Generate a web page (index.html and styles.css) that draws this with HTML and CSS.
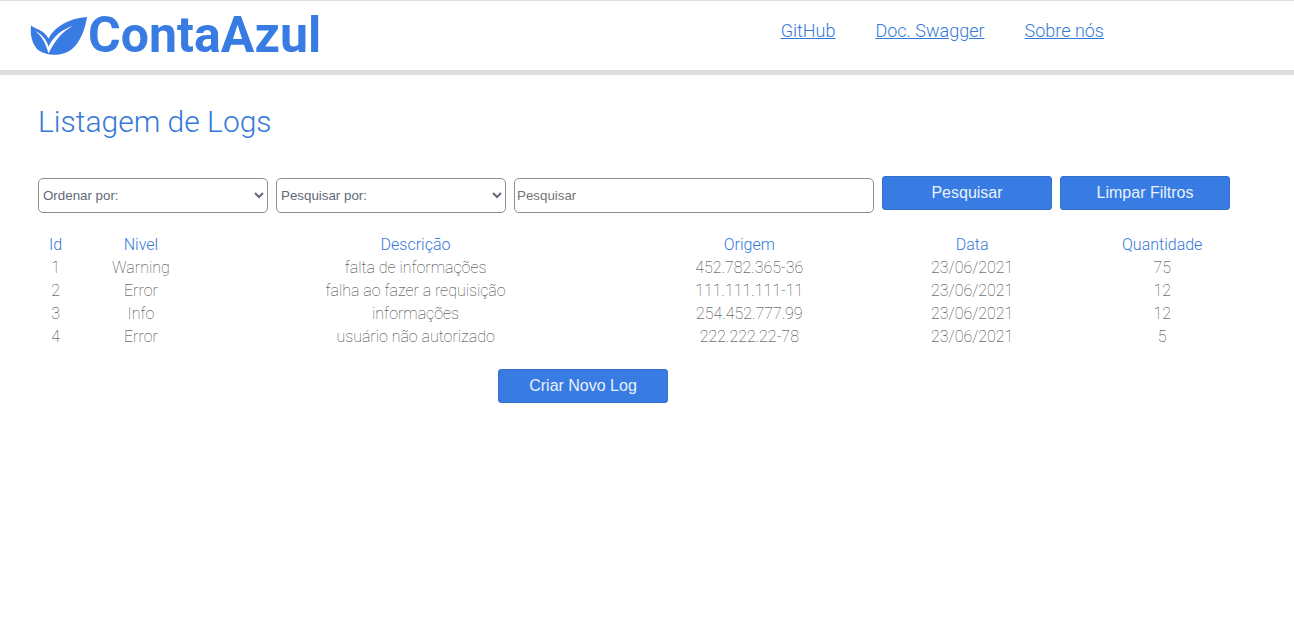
FILE: index.html
```html
<!DOCTYPE html>
<html lang="pt-BR">
<head>
<meta charset="utf-8">
<meta name="viewport" content="width=device-width, initial-scale=1">
<title>ContaAzul - Listagem de Logs</title>
<link rel="stylesheet" href="styles.css">
</head>
<body>
<header class="header">
  <a class="brand" href="#">
    <svg class="brand-mark" viewBox="0 0 58 40" aria-hidden="true">
      <path fill="#387be2" d="M1 9.500C7 14 14 14 18.500 22.500C25 10 40 2 57 1C55 14 50 26 42 33C34 40 17 41 8 34C2 28 0 19 1 9.500Z"/>
      <path fill="#fff" d="M5 15C12 18 16.500 24 18.500 30.500C23 21 32 13 43 10C33 15 25 24 18.500 37.500C16 28 12 20 5 15Z"/>
    </svg>
    <span class="brand-name">ContaAzul</span>
  </a>
  <nav class="nav">
    <a href="#">GitHub</a>
    <a href="#">Doc. Swagger</a>
    <a href="#">Sobre nós</a>
  </nav>
</header>
<main class="content">
  <h1 class="title">Listagem de Logs</h1>
  <form class="filters">
    <select class="field" aria-label="Ordenar por"><option>Ordenar por:</option></select>
    <select class="field" aria-label="Pesquisar por"><option>Pesquisar por:</option></select>
    <input class="field field-search" type="text" placeholder="Pesquisar" aria-label="Pesquisar">
    <button class="button" type="button">Pesquisar</button>
    <button class="button" type="button">Limpar Filtros</button>
  </form>
  <table class="logs">
    <colgroup><col class="col-id"><col class="col-level"><col class="col-description"><col class="col-origin"><col class="col-date"><col class="col-count"></colgroup>
    <thead>
      <tr><th>Id</th><th>Nivel</th><th>Descrição</th><th>Origem</th><th>Data</th><th>Quantidade</th></tr>
    </thead>
    <tbody>
      <tr><td>1</td><td>Warning</td><td>falta de informações</td><td>452.782.365-36</td><td>23/06/2021</td><td>75</td></tr>
      <tr><td>2</td><td>Error</td><td>falha ao fazer a requisição</td><td>111.111.111-11</td><td>23/06/2021</td><td>12</td></tr>
      <tr><td>3</td><td>Info</td><td>informações</td><td>254.452.777.99</td><td>23/06/2021</td><td>12</td></tr>
      <tr><td>4</td><td>Error</td><td>usuário não autorizado</td><td>222.222.22-78</td><td>23/06/2021</td><td>5</td></tr>
    </tbody>
  </table>
  <div class="actions"><button class="button" type="button">Criar Novo Log</button></div>
</main>
</body>
</html>
```
FILE: styles.css
```css
* { box-sizing: border-box; }

body {
  margin: 0;
  background: #fff;
  color: #333;
  font-family: Roboto, sans-serif;
  font-size: 16px;
}

.header {
  display: flex;
  justify-content: space-between;
  align-items: flex-start;
  padding: 14px 190px 14px 30px;
  border-top: 1px solid #ddd;
  border-bottom: 5px solid #ddd;
}

.brand {
  display: flex;
  align-items: center;
  color: #387be2;
  text-decoration: none;
}

.brand-mark { width: 58px; height: 40px; }

.brand-name {
  font-size: 50px;
  font-weight: 700;
  line-height: 41px;
}

.nav { display: flex; gap: 40px; padding-top: 4px; }

.nav a {
  color: #3579d8;
  font-size: 18px;
  font-weight: 300;
  line-height: 24px;
}

.content { padding: 26px 38px; }

.title {
  margin: 0;
  color: #3579d8;
  font-size: 30px;
  font-weight: 300;
  line-height: 42px;
}

.filters {
  display: flex;
  flex-wrap: wrap;
  gap: 8px;
  margin-top: 33px;
}

.field {
  width: 230px;
  height: 35px;
  margin-top: 2px;
  padding: 0;
  border: 1px solid #8f8f8f;
  border-radius: 5px;
  background: #fff;
  color: #616978;
  font-family: "Liberation Sans", Arial, sans-serif;
}

.field-search { width: 360px; padding: 0 2px; }
.field-search::placeholder { color: #757575; }

.button {
  width: 170px;
  height: 34px;
  border: 1px solid #3270cc;
  border-radius: 3px;
  background: #387be2;
  color: #e8f2fc;
  font-family: "Liberation Sans", Arial, sans-serif;
  font-size: 16px;
}

.logs {
  width: 100%;
  margin-top: 20px;
  table-layout: fixed;
  border-collapse: collapse;
  text-align: center;
  line-height: 23px;
}

.logs th { padding: 0; color: #3579d8; font-weight: 300; }
.logs td { padding: 0; font-weight: 100; }

.col-id { width: 2.9%; }
.col-level { width: 11.1%; }
.col-description { width: 34%; }
.col-origin { width: 20.8%; }
.col-date { width: 15.8%; }
.col-count { width: 15.4%; }

.actions {
  display: flex;
  justify-content: center;
  margin-top: 21px;
  padding-right: 128px;
}
```
